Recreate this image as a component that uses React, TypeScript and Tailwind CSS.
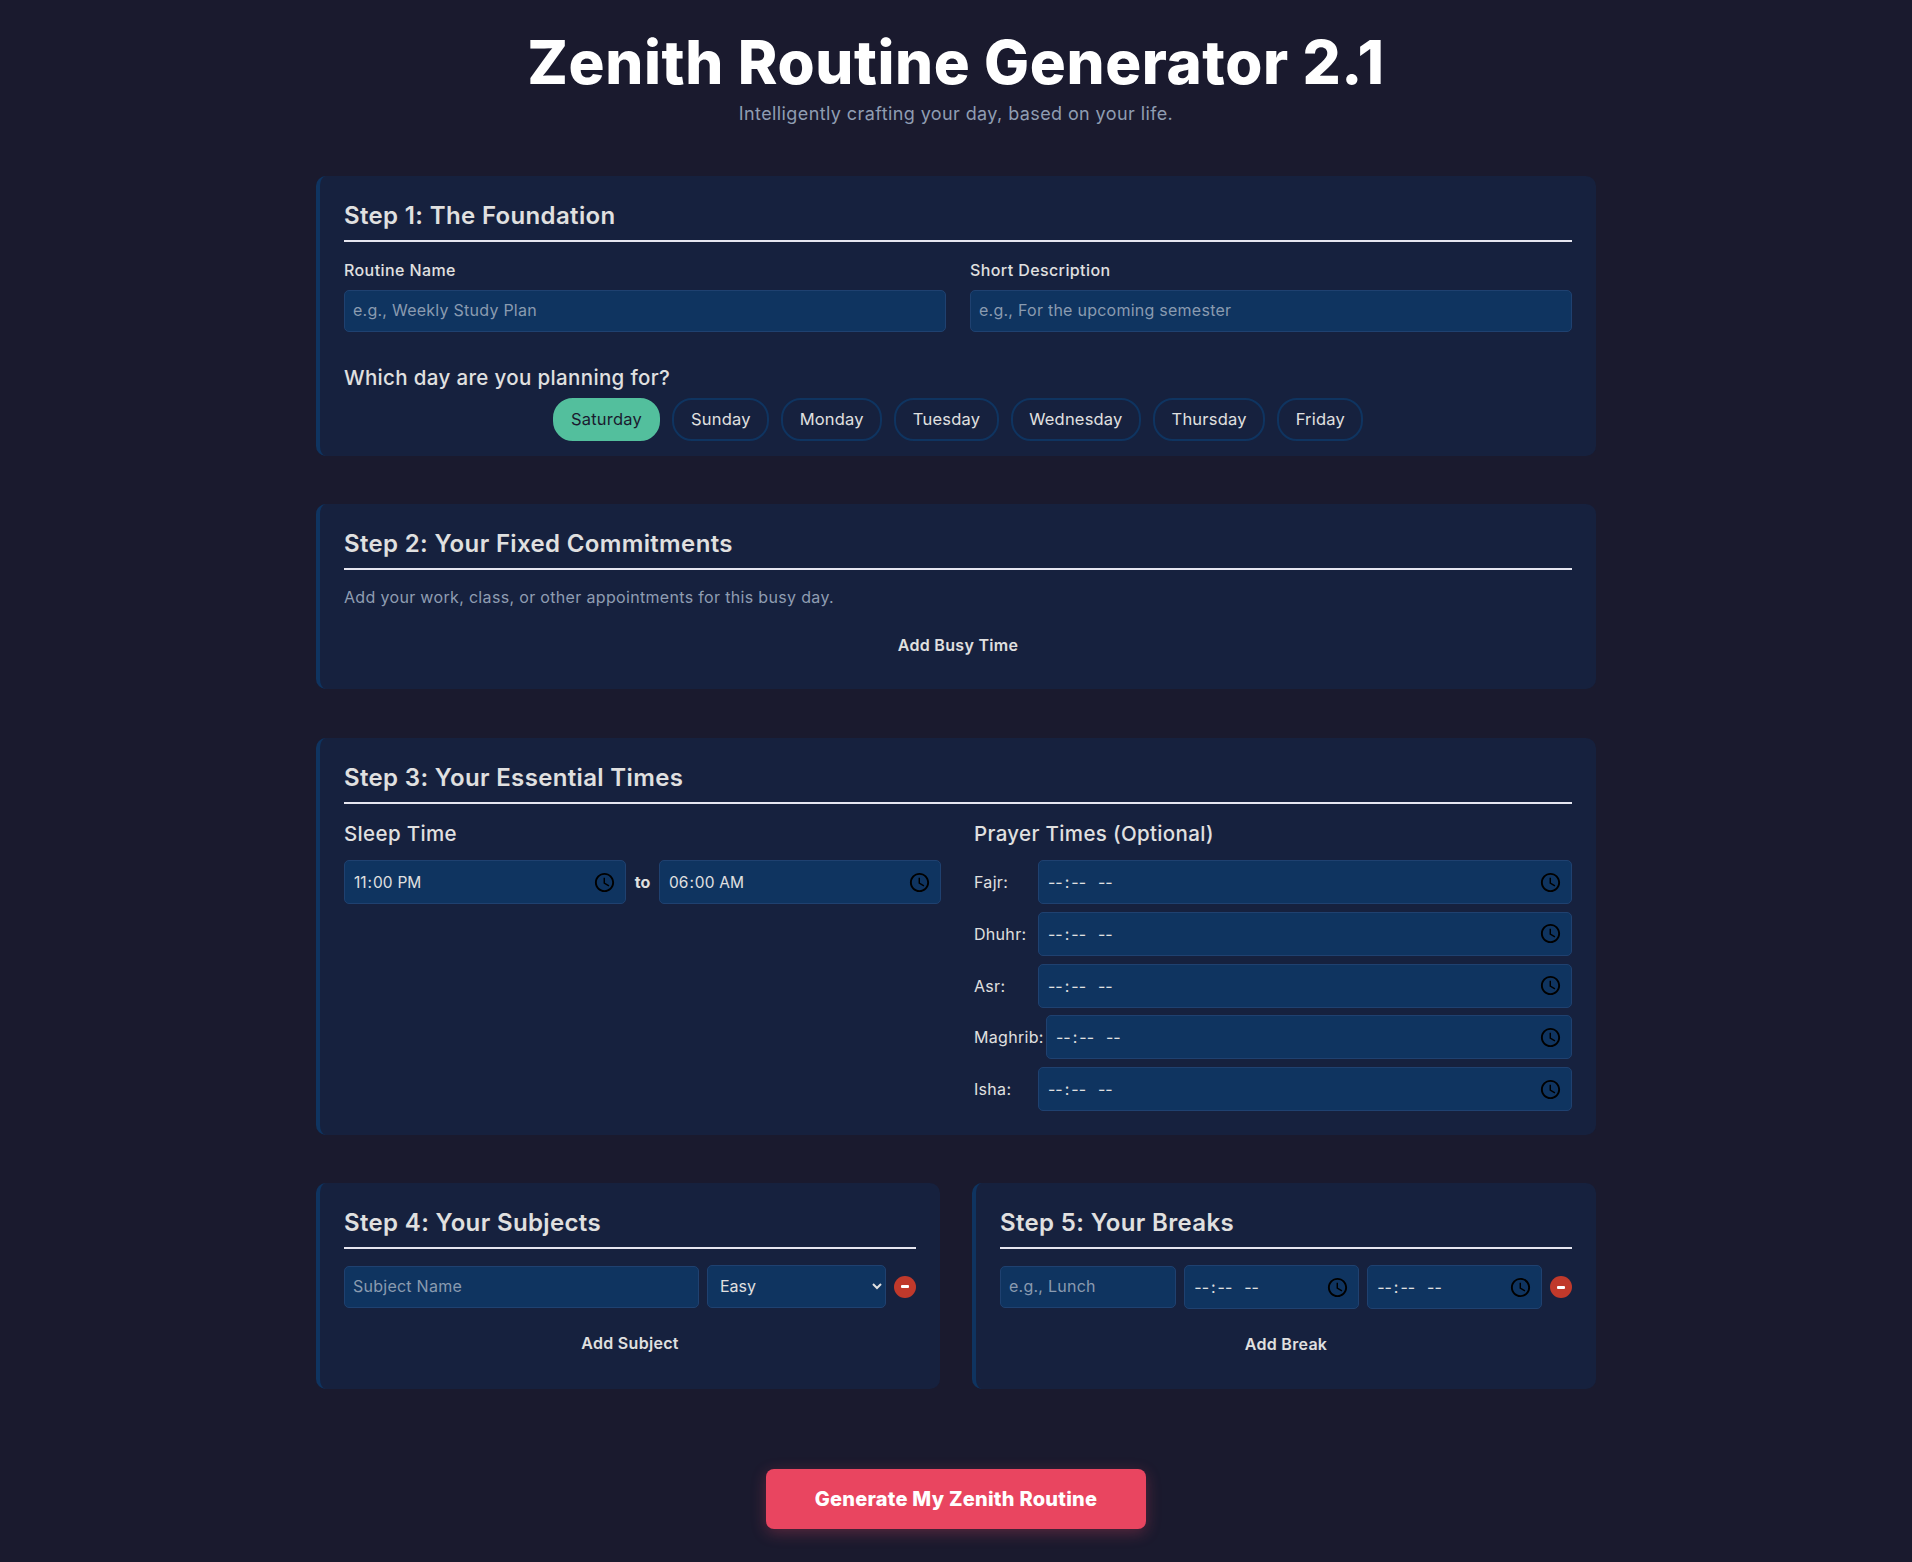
const fieldClass =
  "h-[42px] w-full min-w-0 rounded-[5px] border border-[#1f4170] bg-[#0f3460] px-2 pb-0.5 text-[16px] tracking-[0.25px] text-[#e0e0e0] outline-none placeholder:text-[#8a9bb0]"
const filledTimeClass =
  "h-[44px] w-full min-w-0 rounded-[5px] border border-[#1f4170] bg-[#0f3460] pl-2 pr-[6px] pt-px text-[15.5px] text-[#e0e0e0] outline-none [&::-webkit-calendar-picker-indicator]:h-[23px] [&::-webkit-calendar-picker-indicator]:w-[23px]"
const emptyTimeClass =
  "h-[44px] w-full min-w-0 rounded-[5px] border border-[#1f4170] bg-[#0f3460] pl-2 pr-[6px] text-[16px] text-[#e0e0e0] outline-none [&::-webkit-calendar-picker-indicator]:h-[23px] [&::-webkit-calendar-picker-indicator]:w-[23px] [&::-webkit-datetime-edit-text]:mx-px [&::-webkit-datetime-edit-ampm-field]:ml-[5px]"

const days = ["Saturday", "Sunday", "Monday", "Tuesday", "Wednesday", "Thursday", "Friday"]
const prayers = ["Fajr", "Dhuhr", "Asr", "Maghrib", "Isha"]

function StepTitle({ children }: { children: React.ReactNode }) {
  return (
    <h2 className="mb-4 border-b-2 border-[#e6e6f0] pb-2 text-[24px] leading-[32px] font-semibold tracking-[0.35px] text-[#e0e0e0]">
      {children}
    </h2>
  )
}

function Card({ children, className = "" }: { children: React.ReactNode; className?: string }) {
  return (
    <section className={`rounded-[10px] border-l-4 border-[#0f3460] bg-[#16213e] px-6 pt-6 ${className}`}>
      {children}
    </section>
  )
}

function AddButton({ children, className = "" }: { children: React.ReactNode; className?: string }) {
  return (
    <button className={`h-[44px] w-full text-center text-[16px] font-semibold tracking-[0.3px] text-[#e0e0e0] ${className}`}>
      {children}
    </button>
  )
}

function RemoveButton() {
  return (
    <button className="flex h-[22px] w-[22px] shrink-0 items-center justify-center rounded-full bg-[#c0392b]">
      <span className="h-[3px] w-[8px] rounded-[1px] bg-white" />
    </button>
  )
}

export default function App() {
  return (
    <div className="min-h-screen bg-[#1a1a2e] [font-family:Inter,sans-serif] text-[#e0e0e0]">
      <div className="mx-auto w-[1280px] pt-[26px] pb-[33px]">
        {/* Header */}
        <header className="mb-[49px] text-center">
          <h1 className="text-[60px] leading-[72px] font-extrabold tracking-[0.6px] text-white">Zenith Routine Generator 2.1</h1>
          <p className="mt-[3px] text-[18px] leading-[26px] tracking-[0.4px] text-[#8f9db2]">
            Intelligently crafting your day, based on your life.
          </p>
        </header>

        <div className="flex flex-col gap-[48px]">
          {/* Step 1 */}
          <Card className="pb-[15px]">
            <StepTitle>Step 1: The Foundation</StepTitle>
            <div className="grid grid-cols-2 gap-6">
              <div>
                <label className="mb-2 block text-[16px] leading-6 font-medium tracking-[0.4px]">Routine Name</label>
                <input className={fieldClass} placeholder="e.g., Weekly Study Plan" />
              </div>
              <div>
                <label className="mb-2 block text-[16px] leading-6 font-medium tracking-[0.4px]">Short Description</label>
                <input className={fieldClass} placeholder="e.g., For the upcoming semester" />
              </div>
            </div>
            <h3 className="mt-[31px] mb-[5px] text-[20.5px] leading-[30px] font-medium tracking-[0.35px]">Which day are you planning for?</h3>
            <div className="flex justify-center gap-3">
              {days.map((day) =>
                day === "Saturday" ? (
                  <button
                    key={day}
                    className="h-[43px] rounded-[20px] border-2 border-[#53bf9d] bg-[#53bf9d] px-[16.5px] pb-px text-[16.5px] tracking-[0.2px] text-[#1a1a2e]"
                  >
                    {day}
                  </button>
                ) : (
                  <button key={day} className="h-[43px] rounded-[20px] border-2 border-[#0f3460] px-[16.5px] pb-px text-[16.5px] tracking-[0.2px]">
                    {day}
                  </button>
                )
              )}
            </div>
          </Card>

          {/* Step 2 */}
          <Card className="pb-[22px]">
            <StepTitle>Step 2: Your Fixed Commitments</StepTitle>
            <p className="mt-px text-[16px] leading-[22px] tracking-[0.33px] text-[#8f9db2]">Add your work, class, or other appointments for this busy day.</p>
            <AddButton className="mt-[15px]">Add Busy Time</AddButton>
          </Card>

          {/* Step 3 */}
          <Card className="mt-px pb-6">
            <StepTitle>Step 3: Your Essential Times</StepTitle>
            <div className="grid grid-cols-2 gap-8">
              <div className="pr-px">
                <h3 className="mb-[11px] -mt-px text-[20.5px] leading-[30px] font-medium tracking-[0.35px]">Sleep Time</h3>
                <div className="flex items-center gap-2">
                  <input type="time" defaultValue="23:00" className={filledTimeClass} />
                  <span className="w-[17px] shrink-0 text-center text-[16px] font-bold">to</span>
                  <input type="time" defaultValue="06:00" className={filledTimeClass} />
                </div>
              </div>
              <div>
                <h3 className="mb-[11px] -mt-px text-[20.5px] leading-[30px] font-medium tracking-[0.35px]">Prayer Times (Optional)</h3>
                <div className="flex flex-col gap-[7.8px]">
                  {prayers.map((name) => (
                    <div key={name} className="flex items-center">
                      <label className={name === "Maghrib" ? "w-[72px] shrink-0 text-[16px] tracking-[0.3px]" : "w-[64px] shrink-0 text-[16px] tracking-[0.3px]"}>
                        {name}:
                      </label>
                      <input type="time" className={emptyTimeClass} />
                    </div>
                  ))}
                </div>
              </div>
            </div>
          </Card>

          <div className="grid grid-cols-2 gap-8">
            {/* Step 4 */}
            <Card className="pb-[23px]">
              <StepTitle>Step 4: Your Subjects</StepTitle>
              <div className="flex items-center gap-2">
                <input className={`${fieldClass} flex-[2]`} placeholder="Subject Name" />
                <select className="h-[43px] w-[179px] shrink-0 rounded-[5px] border border-[#1f4170] bg-[#0f3460] px-2 pb-0.5 text-[16px] text-[#e0e0e0] outline-none">
                  <option>Easy</option>
                  <option>Medium</option>
                  <option>Hard</option>
                </select>
                <RemoveButton />
              </div>
              <AddButton className="mt-[13px]">Add Subject</AddButton>
            </Card>

            {/* Step 5 */}
            <Card className="pb-[23px]">
              <StepTitle>Step 5: Your Breaks</StepTitle>
              <div className="flex items-center gap-2">
                <input className={fieldClass} placeholder="e.g., Lunch" />
                <input type="time" className={emptyTimeClass} />
                <input type="time" className={emptyTimeClass} />
                <RemoveButton />
              </div>
              <AddButton className="mt-[13px]">Add Break</AddButton>
            </Card>
          </div>
        </div>

        {/* Generate */}
        <div className="mt-[80px] flex justify-center">
          <button className="h-[60px] w-[380px] rounded-[8px] bg-[#e94560] text-[20px] font-extrabold tracking-[0.25px] text-white shadow-[0_4px_15px_rgba(233,69,96,0.3)]">
            Generate My Zenith Routine
          </button>
        </div>
      </div>
    </div>
  )
}
